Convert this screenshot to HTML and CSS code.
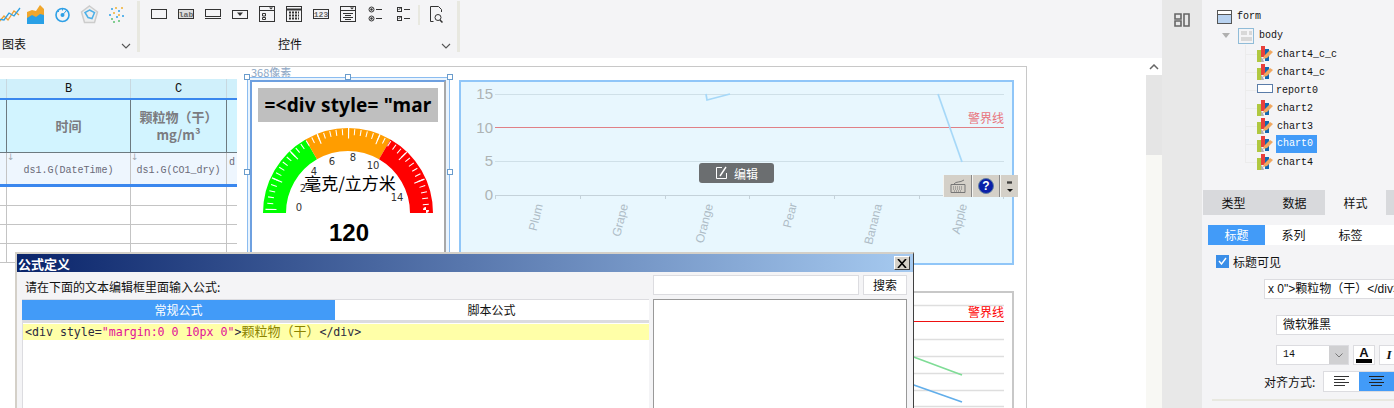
FILE: index.html
```html
<!DOCTYPE html>
<html lang="zh">
<head>
<meta charset="utf-8">
<title>表单设计</title>
<link rel="stylesheet" href="styles.css">
</head>
<body>
<div class="app">
  <div class="work">
    <header class="toolbar">
      <section class="tb-group tb-charts">
        <div class="tb-icons">
          <svg class="ico-first" viewBox="5 0 22 20"><polyline points="3,18 9,11 13,15 19,6 24,10" fill="none" stroke="#f0a030" stroke-width="1.3"/><polyline points="3,14 9,15 14,8 19,11 25,3" fill="none" stroke="#2ea0e0" stroke-width="1.3"/></svg>
          <svg class="ico" viewBox="0 0 27 20"><path d="M5 19V9l5-2 4 2 4-5 4 1 0 14z" fill="#29a0e6"/><path d="M5 13V7l5-2 4 1 4-6 4 4v6l-4-1-4 3-4-2z" fill="#f0a62c"/></svg>
          <svg class="ico" viewBox="0 0 27 20"><circle cx="13.500" cy="10" r="6.500" fill="none" stroke="#2ea0e6" stroke-width="1.600"/><circle cx="13.500" cy="10" r="2" fill="#2ea0e6"/><path d="M13.500 10l4-4.500" stroke="#2ea0e6"/><path d="M9 6l1 1M13.500 4v1.500" stroke="#2ea0e6"/></svg>
          <svg class="ico" viewBox="0 0 27 20"><path d="M13.500 1l8 6-3 10.500h-10l-3-10.500z" fill="#eee" stroke="#cccccc" stroke-width="1.500"/><path d="M13.500 5l5 2.500-2.500 6-4-1-3-5z" fill="none" stroke="#4db0e8" stroke-width="1.500"/></svg>
          <svg class="ico" viewBox="0 0 27 20"><g fill="#2ea0e6"><circle cx="9" cy="4" r="1"/><circle cx="16" cy="6" r="1"/><circle cx="7" cy="10" r="1"/><circle cx="20" cy="11" r="1"/><circle cx="14" cy="12" r="1"/></g><g fill="#f0b030"><circle cx="13" cy="3" r="1"/><circle cx="19" cy="3" r="1"/><circle cx="11" cy="8" r="1"/><circle cx="16" cy="10" r="1"/></g><g fill="#5cc070"><circle cx="11" cy="17" r="1"/><circle cx="16" cy="16" r="1"/><circle cx="9" cy="14" r="1"/></g></svg>
        </div>
        <div class="tb-foot tb-foot-charts">
          <span class="tb-label">图表</span>
          <svg class="chev" viewBox="0 0 10 6"><path d="M1 1l4 4 4-4" fill="none" stroke="#555" stroke-width="1.100"/></svg>
        </div>
      </section>
      <section class="tb-group tb-controls">
        <div class="tb-icons">
          <svg class="ico" viewBox="0 0 27 20"><rect x="5.500" y="4.500" width="15" height="9" fill="none" stroke="#333"/></svg>
          <svg class="ico" viewBox="0 0 27 20"><rect x="5.500" y="4.500" width="15" height="9" fill="#ddd" stroke="#333"/><text x="13" y="12" class="ico-t">lab</text></svg>
          <svg class="ico" viewBox="0 0 27 20"><rect x="5.500" y="4.500" width="15" height="7" fill="none" stroke="#333"/><path d="M5 13.500h16" stroke="#333"/></svg>
          <svg class="ico" viewBox="0 0 27 20"><rect x="5.500" y="5.500" width="15" height="8" fill="none" stroke="#333"/><path d="M10 7.500h6l-3 3.500z" fill="#333"/></svg>
          <svg class="ico" viewBox="0 0 27 20"><rect x="5.500" y="1.500" width="15" height="15" fill="none" stroke="#333"/><path d="M5 5.500h16" stroke="#333"/><path d="M15 2.500h4l-2 2z" fill="#333"/><path d="M8.500 8.500h3v2.500h-3zM8.500 12.500h3v2h-3z" fill="none" stroke="#333"/></svg>
          <svg class="ico" viewBox="0 0 27 20"><rect x="5.500" y="1.500" width="15" height="15" fill="none" stroke="#333"/><path d="M5 4.500h16" stroke="#333" stroke-width="2"/><path d="M8 7.500h10M8 10.500h10M8 13.500h10" stroke="#333" stroke-width="2" stroke-dasharray="2 1"/></svg>
          <svg class="ico" viewBox="0 0 27 20"><rect x="5.500" y="4.500" width="15" height="9" fill="none" stroke="#333"/><text x="13" y="12" class="ico-t">123</text></svg>
          <svg class="ico" viewBox="0 0 27 20"><rect x="5.500" y="1.500" width="15" height="15" fill="none" stroke="#333"/><path d="M5 5.500h16" stroke="#333"/><path d="M15 2.500h4l-2 2z" fill="#333"/><path d="M8 8.500h10M10 10.500h6M8 12.500h10M10 14.500h6" stroke="#333"/></svg>
          <svg class="ico" viewBox="0 0 27 20"><circle cx="9.500" cy="4.500" r="2.500" fill="none" stroke="#333"/><circle cx="9.500" cy="4.500" r="1.200" fill="#333"/><circle cx="9.500" cy="13.500" r="2.500" fill="none" stroke="#333"/><circle cx="9.500" cy="13.500" r="1.200" fill="#333"/><path d="M14 4.500h6M14 13.500h6" stroke="#333"/></svg>
          <svg class="ico" viewBox="0 0 27 20"><rect x="8.500" y="2.500" width="4" height="4" fill="none" stroke="#333"/><rect x="8.500" y="11.500" width="4" height="4" fill="none" stroke="#333"/><path d="M9.500 5l2-2M9.500 14l2-2" stroke="#333"/><path d="M15 4.500h6M15 13.500h6" stroke="#333"/></svg>
          <span class="tb-sep"></span>
          <svg class="ico" viewBox="0 0 27 20"><path d="M19.500 7V4.500l-3-3h-8v15h3" fill="none" stroke="#333"/><circle cx="16" cy="12.500" r="3" fill="none" stroke="#333"/><path d="M18 15l2.500 2.500" stroke="#333" stroke-width="1.500"/></svg>
        </div>
        <div class="tb-foot tb-foot-controls">
          <span class="tb-label">控件</span>
          <svg class="chev" viewBox="0 0 10 6"><path d="M1 1l4 4 4-4" fill="none" stroke="#555" stroke-width="1.100"/></svg>
        </div>
      </section>
    </header>

    <div class="lower">
      <main class="stage">
        <div class="frame"></div>

        <div class="sheet">
          <div class="row row-letters"><span class="c c0"></span><span class="c c1">B</span><span class="c c2">C</span><span class="c c3"></span></div>
          <div class="row row-title"><span class="c c0"></span><span class="c c1">时间</span><span class="c c2">颗粒物（干）<br>mg/m³</span><span class="c c3"></span></div>
          <div class="row row-formula">
            <span class="c c0"></span>
            <span class="c c1"><i class="mark">↓</i>ds1.G(DateTime)</span>
            <span class="c c2"><i class="mark">↓</i>ds1.G(CO1_dry)</span>
            <span class="c c3"><b class="clip">d</b></span>
          </div>
          <div class="row row-empty"><span class="c c0"></span><span class="c c1"></span><span class="c c2"></span><span class="c c3"></span></div>
          <div class="row row-empty"><span class="c c0"></span><span class="c c1"></span><span class="c c2"></span><span class="c c3"></span></div>
          <div class="row row-empty"><span class="c c0"></span><span class="c c1"></span><span class="c c2"></span><span class="c c3"></span></div>
          <div class="row row-empty"><span class="c c0"></span><span class="c c1"></span><span class="c c2"></span><span class="c c3"></span></div>
        </div>

        <span class="ruler">368像素</span>
        <div class="selection"></div>
        <span class="handle h1"></span><span class="handle h2"></span><span class="handle h3"></span><span class="handle h4"></span><span class="handle h5"></span>

        <section class="gauge-card">
          <div class="gauge-title">=&lt;div style= "mar</div>
          <svg class="gauge" width="192" height="128" viewBox="0 0 192 128">
            <path d="M22.500 91A73.500 73.500 0 0 1 59.250 27.350" fill="none" stroke="#00ff00" stroke-width="23"/>
            <path d="M59.250 27.350A73.500 73.500 0 0 1 132.750 27.350" fill="none" stroke="#ff9d00" stroke-width="23"/>
            <path d="M132.750 27.350A73.500 73.500 0 0 1 169.500 91" fill="none" stroke="#ff0000" stroke-width="23"/>
            <path d="M18 88A78 78 0 0 1 174 88" fill="none" stroke="#fff" stroke-width="6" pathLength="40" stroke-dasharray="0.170 0.830"/>
            <path d="M19 88A77 77 0 0 1 173 88" fill="none" stroke="#fff" stroke-width="11" pathLength="8" stroke-dasharray="0.040 0.960"/>
            <g class="gauge-num">
              <text x="47" y="89">0</text><text x="51" y="70">2</text><text x="62" y="53">4</text><text x="80" y="43">6</text><text x="101" y="39">8</text><text x="121" y="47">10</text><text x="145" y="79">14</text>
            </g>
            <text class="gauge-unit" x="98" y="68">毫克/立方米</text>
            <text class="gauge-value" x="97" y="119">120</text>
          </svg>
        </section>

        <section class="chart-card">
          <svg class="line-chart" width="551" height="181" viewBox="0 0 551 181">
            <g stroke="#cfe0e8" stroke-width="1">
              <path d="M34 12.500H543M34 79.500H543"/>
            </g>
            <path d="M34 113.500H543" stroke="#c4d2da"/>
            <path d="M34.500 113v4M119.500 113v4M204.500 113v4M288.500 113v4M373.500 113v4M458.500 113v4M542.500 113v4" stroke="#c4d2da"/>
            <path d="M34 45.500H543" stroke="#e08086"/>
            <polyline points="245,12 246,18 269,12" fill="none" stroke="#a6d8f8" stroke-width="1.700"/>
            <line x1="477" y1="12" x2="501" y2="80" stroke="#a6d8f8" stroke-width="1.700"/>
            <g class="y-axis"><text x="32" y="17">15</text><text x="32" y="51">10</text><text x="32" y="84">5</text><text x="32" y="118">0</text></g>
            <text class="limit" x="543" y="41">警界线</text>
            <g class="x-axis">
              <text transform="translate(82 123) rotate(-76)">Plum</text>
              <text transform="translate(167 123) rotate(-76)">Grape</text>
              <text transform="translate(252 123) rotate(-76)">Orange</text>
              <text transform="translate(336 122) rotate(-76)">Pear</text>
              <text transform="translate(421 123) rotate(-76)">Banana</text>
              <text transform="translate(506 123) rotate(-76)">Apple</text>
            </g>
          </svg>
        </section>

        <button class="edit-btn" type="button">
          <svg width="13" height="14" viewBox="0 0 13 14"><path d="M7 1.500H1.500v11h10V7" fill="none" stroke="#fff"/><path d="M5 10l6-9" stroke="#fff" stroke-width="1.400"/></svg>
          <span>编辑</span>
        </button>

        <div class="float-tools">
          <span class="ft ft-kb"><svg width="20" height="17" viewBox="0 0 20 17"><path d="M3 6.500h14v8H3z" fill="#d4d0c8" stroke="#777"/><path d="M5 9h10M5 11h10M6 13h8" stroke="#777" stroke-dasharray="1 1"/><path d="M6 6c2-3 6-1 10-4" fill="none" stroke="#777"/></svg></span>
          <span class="ft ft-help"><i>?</i></span>
          <span class="ft ft-more"><svg width="8" height="16" viewBox="0 0 8 16"><path d="M1 4h5M1 5h5" stroke="#111"/><path d="M1 11h6l-3 3z" fill="#111"/></svg></span>
        </div>

        <section class="chart-card2">
          <svg class="line-chart2" width="551" height="120" viewBox="0 0 551 120">
            <path d="M450 12.500H543M450 46.500H543M450 63.500H543M450 80.500H543M450 97.500H543M450 113.500H543" stroke="#dedede" stroke-width="1.400"/>
            <path d="M450 28.500H543" stroke="#ee1111" stroke-width="1.200"/>
            <polyline points="450,63 501,82" fill="none" stroke="#7fdc96" stroke-width="1.700"/>
            <polyline points="450,91 501,109" fill="none" stroke="#62aeea" stroke-width="1.700"/>
            <text class="limit2" x="543" y="24">警界线</text>
          </svg>
        </section>

        <section class="dialog">
          <div class="dlg-title">
            <span>公式定义</span>
            <button class="dlg-close" type="button"><svg width="10" height="9" viewBox="0 0 10 9"><path d="M1 0l8 9M9 0L1 9" stroke="#000" stroke-width="1.600"/></svg></button>
          </div>
          <div class="dlg-body">
            <div class="dlg-left">
              <p class="dlg-hint">请在下面的文本编辑框里面输入公式:</p>
              <div class="dlg-tabs"><span class="dlg-tab on">常规公式</span><span class="dlg-tab">脚本公式</span></div>
              <div class="editor">
                <div class="code-line"><span class="k">&lt;div style=</span><span class="s">"margin:0 0 10px 0"</span><span class="k">&gt;</span><span class="t">颗粒物（干）</span><span class="k">&lt;/div&gt;</span></div>
              </div>
            </div>
            <div class="dlg-right">
              <div class="search"><span class="search-in"></span><span class="search-btn">搜索</span></div>
              <div class="results"></div>
            </div>
          </div>
        </section>
      </main>
      <div class="vscroll">
        <span class="vs-up"><svg width="10" height="6" viewBox="0 0 10 6"><path d="M1 5l4-4 4 4" fill="none" stroke="#666" stroke-width="1.500"/></svg></span>
        <span class="vs-thumb"></span>
      </div>
    </div>
  </div>

  <div class="rail">
    <svg width="16" height="14" viewBox="0 0 16 14"><path d="M1 1h6v5H1zM1 8h6v5H1zM10 1h5v12h-5z" fill="#e8e8e8" stroke="#666" stroke-width="1.600"/></svg>
  </div>

  <aside class="side">
    <nav class="tree">
      <div class="node n-form">
        <svg width="15" height="14" viewBox="0 0 15 14"><rect x=".5" y=".5" width="14" height="13" fill="#b8d2f0" stroke="#555"/><path d="M.5 4.500h14" stroke="#555"/><rect x="1" y="1" width="13" height="3" fill="#fff"/></svg>
        <span>form</span>
      </div>
      <div class="node n-body">
        <i class="tri"></i>
        <svg width="16" height="16" viewBox="0 0 16 16"><rect x=".5" y=".5" width="15" height="15" fill="#f4f4f6" stroke="#90bcd8"/><rect x="3" y="3" width="6" height="4" fill="#d8d8d8"/><rect x="11" y="3" width="3" height="4" fill="#d8d8d8"/><rect x="3" y="9" width="11" height="4" fill="#d8d8d8"/></svg>
        <span>body</span>
      </div>
      <div class="children">
        <div class="node"><svg class="ci" viewBox="0 0 16 16"><use href="#chart-ico"/></svg><span>chart4_c_c</span></div>
        <div class="node"><svg class="ci" viewBox="0 0 16 16"><use href="#chart-ico"/></svg><span>chart4_c</span></div>
        <div class="node"><svg class="ci" viewBox="0 0 16 16"><rect x=".5" y="2.500" width="15" height="8" fill="#fff" stroke="#5a7ca8"/></svg><span class="tight">report0</span></div>
        <div class="node"><svg class="ci" viewBox="0 0 16 16"><use href="#chart-ico"/></svg><span>chart2</span></div>
        <div class="node"><svg class="ci" viewBox="0 0 16 16"><use href="#chart-ico"/></svg><span>chart3</span></div>
        <div class="node"><svg class="ci" viewBox="0 0 16 16"><use href="#chart-ico"/></svg><span class="sel">chart0</span></div>
        <div class="node"><svg class="ci" viewBox="0 0 16 16"><use href="#chart-ico"/></svg><span>chart4</span></div>
      </div>
      <svg class="defs" width="0" height="0"><defs><g id="chart-ico"><rect x="0" y="4" width="4" height="12" fill="#b0c840"/><rect x="4" y="0" width="4" height="11" fill="#e8403c"/><rect x="8" y="3" width="4" height="12" fill="#1068b0"/><path d="M6 13l1-3 6-6 3 2-6 6z" fill="#f0a860"/><path d="M4 16v-5l2 2 1 3z" fill="#b0b0b0"/></g></defs></svg>
    </nav>

    <div class="tabs"><span class="tab">类型</span><span class="tab">数据</span><span class="tab on">样式</span><span class="tab tab-rest"></span></div>
    <div class="subtabs"><span class="sub on">标题</span><span class="sub">系列</span><span class="sub">标签</span></div>

    <label class="check"><i class="box"><svg width="9" height="8" viewBox="0 0 9 8"><path d="M1 4l2.500 3L8 1" fill="none" stroke="#fff" stroke-width="1.400"/></svg></i>标题可见</label>

    <div class="field f-title"><span>x 0"&gt;颗粒物（干）&lt;/div&gt;</span></div>
    <div class="field f-font">微软雅黑</div>
    <div class="font-row">
      <span class="select"><b>14</b><i class="sel-arrow"><svg width="8" height="5" viewBox="0 0 8 5"><path d="M.5.500L4 4 7.500.500" fill="none" stroke="#777"/></svg></i></span>
      <span class="color-btn"><b>A</b><i></i></span>
      <span class="italic-btn">I</span>
    </div>
    <div class="align-row">
      <span class="align-label">对齐方式:</span>
      <div class="align-group">
        <span class="al"><svg width="15" height="11" viewBox="0 0 15 11"><path d="M0 .500h15M0 3.500h11M0 6.500h15M0 9.500h11" stroke="#333"/></svg></span>
        <span class="al on"><svg width="15" height="11" viewBox="0 0 15 11"><path d="M0 .500h15M2 3.500h11M0 6.500h15M2 9.500h11" stroke="#222"/></svg></span>
      </div>
    </div>
    <div class="rule"></div>
  </aside>
</div>
</body>
</html>
```

FILE: styles.css
```css
* { box-sizing: border-box; }
html, body { margin: 0; padding: 0; background: #fff; }
body { font-family: "Liberation Sans", "Noto Sans CJK SC", sans-serif; font-size: 12px; color: #111; overflow: hidden; }
p { margin: 0; }
i { font-style: normal; }
button { padding: 0; margin: 0; font: inherit; }

.app { display: flex; width: 1394px; height: 408px; overflow: hidden; }
.work { width: 1162px; display: flex; flex-direction: column; }
.rail { width: 40px; background: #e8e8e8; display: flex; justify-content: center; align-items: flex-start; padding-top: 13px; }
.side { width: 192px; background: #f4f4f6; overflow: hidden; }

/* toolbar */
.toolbar { height: 58px; background: #f4f4f6; display: flex; flex: none; }
.tb-group { height: 51px; margin-top: 1px; display: flex; flex-direction: column; border-right: 3px solid #e8e8e0; }
.tb-charts { width: 140px; }
.tb-controls { width: 320px; padding-left: 6px; }
.tb-icons { display: flex; align-items: flex-start; height: 38px; padding-top: 4px; flex: none; }
.ico { width: 27px; height: 20px; flex: none; }
.ico-first { width: 22px; height: 20px; flex: none; }
.ico-t { font-family: "Liberation Mono", monospace; font-size: 8px; font-weight: 700; text-anchor: middle; fill: #666; }
.tb-sep { width: 2px; height: 20px; margin: 0 2px; background: #e8e8e0; flex: none; }
.tb-foot { display: flex; align-items: center; height: 13px; flex: none; }
.tb-foot-charts { padding-left: 2px; }
.tb-foot-controls { padding-left: 132px; }
.tb-label { font-size: 12px; line-height: 13px; }
.tb-foot-charts .chev { margin-left: 95px; }
.tb-foot-controls .chev { margin-left: 139px; }
.chev { width: 10px; height: 6px; flex: none; }

/* stage */
.lower { flex: 1; display: flex; min-height: 0; }
.stage { position: relative; width: 1146px; background: #fff; overflow: hidden; }
.frame { position: absolute; left: -2px; top: 8px; width: 1029px; height: 400px; border: 1px solid #c8c8c8; }

.vscroll { width: 16px; background: #f8f8f4; display: flex; flex-direction: column; }
.vs-up { height: 17px; background: #fff; display: flex; align-items: center; justify-content: center; }
.vs-thumb { height: 80px; background: #e5e5e5; }

/* sheet */
.sheet { position: absolute; left: 0; top: 21px; width: 237px; font-family: "Liberation Mono", "Noto Sans CJK SC", monospace; }
.row { display: grid; grid-template-columns: 7px 124px 96px 10px; }
.c { display: flex; align-items: center; justify-content: center; text-align: center; border-right: 1px solid #c4c4c4; position: relative; }
.c3 { border-right: 0; overflow: hidden; }
.row-letters { height: 19px; background: #d0f0fb; }
.row-letters .c { border-right-color: #c8d8e0; font-size: 12px; color: #111; }
.row-title { height: 55px; background: #d2f4ff; border-top: 2px solid #3a87ee; border-bottom: 1px solid #6d7a80; }
.row-title .c { border-right-color: #6d7a80; font-family: "Noto Sans CJK SC", "Liberation Sans", sans-serif; font-size: 13px; line-height: 18px; font-weight: 700; color: #7b7b80; }
.row-formula { height: 34px; background: #eef6fe; border-bottom: 3px solid #3a87ee; }
.row-formula .c { font-size: 10px; color: #6a6a78; padding-top: 4px; }
.row-empty { height: 19px; border-bottom: 1px solid #c4c4c4; }
.mark { position: absolute; left: 0; top: -2px; font-size: 9px; line-height: 12px; color: #a0a8b0; font-family: "DejaVu Sans", sans-serif; }
.clip { font-weight: 400; position: absolute; left: 2px; top: 4px; }

/* gauge card */
.ruler { position: absolute; left: 251px; top: 8px; font-size: 11px; line-height: 13px; color: #8ca6c4; font-family: "Noto Sans CJK SC", sans-serif; }
.selection { position: absolute; left: 247px; top: 19px; width: 203px; height: 190px; background: #eaf4fd; border: 1px solid #8bbcf0; }
.handle { position: absolute; width: 6px; height: 6px; background: #fff; border: 1px solid #6a9ccc; }
.h1 { left: 244px; top: 16px; }
.h2 { left: 345px; top: 16px; }
.h3 { left: 447px; top: 16px; }
.h4 { left: 244px; top: 111px; }
.h5 { left: 447px; top: 111px; }
.gauge-card { position: absolute; left: 250px; top: 22px; width: 196px; height: 180px; background: #fff; border: 2px solid #a8a8a8; border-top-color: #6ea0e0; border-left-color: #6ea0e0; padding: 6px; }
.gauge-title { height: 34px; background: #bfbfbf; font-family: "Noto Sans", sans-serif; font-size: 19px; font-weight: 700; letter-spacing: .2px; line-height: 34px; color: #000; text-align: center; white-space: nowrap; overflow: hidden; }
.gauge { display: block; margin: 0 -6px; }
.gauge-num text { font-family: "DejaVu Sans", sans-serif; font-size: 10px; fill: #333; text-anchor: middle; }
.gauge-unit { font-family: "Noto Sans CJK SC", sans-serif; font-size: 17px; text-anchor: middle; fill: #000; }
.gauge-value { font-family: "Liberation Sans", sans-serif; font-size: 24px; font-weight: 700; text-anchor: middle; fill: #000; }

/* line chart */
.chart-card { position: absolute; left: 459px; top: 22px; width: 555px; height: 185px; background: #e8f7fe; border: 2px solid #90c6f8; }
.line-chart { display: block; }
.y-axis text { font-size: 15px; fill: #aeb4b4; text-anchor: end; }
.limit { font-family: "Noto Sans CJK SC", sans-serif; font-size: 12px; fill: #e8747c; text-anchor: end; }
.x-axis text { font-size: 12px; fill: #aebcc6; text-anchor: end; }
.edit-btn { position: absolute; left: 699px; top: 105px; width: 75px; height: 20px; background: #6b6e70; border: 0; border-radius: 3px; color: #fff; font-family: "Noto Sans CJK SC", sans-serif; font-size: 12px; display: flex; align-items: center; justify-content: center; gap: 6px; }
.float-tools { position: absolute; left: 943px; top: 117px; height: 22px; display: flex; background: #d4d0c8; }
.ft { display: flex; align-items: center; justify-content: center; height: 22px; border-left: 1px solid #f4f4f0; border-right: 1px solid #888; }
.ft-kb { width: 29px; }
.ft-help { width: 28px; }
.ft-help i { width: 16px; height: 16px; border-radius: 50%; background: #0a1fa8; border: 1px solid #6080a0; color: #fff; font-size: 12px; font-weight: 700; line-height: 14px; text-align: center; }
.ft-more { width: 18px; border-right: 0; }

.chart-card2 { position: absolute; left: 459px; top: 233px; width: 555px; height: 130px; background: #fff; border: 2px solid #c8c8c8; }
.line-chart2 { display: block; }
.limit2 { font-family: "Noto Sans CJK SC", sans-serif; font-size: 12px; fill: #f00; text-anchor: end; }

/* dialog */
.dialog { position: absolute; left: 15px; top: 194px; width: 899px; height: 170px; background: #f4f4f6; border: 2px solid #d4d0c8; border-right: 1px solid #404040; border-bottom: 0; }
.dlg-title { height: 18px; background: linear-gradient(90deg, #0a246a, #a6caf0); display: flex; align-items: center; justify-content: space-between; padding: 0 3px 0 1px; color: #fff; font-family: "Noto Sans CJK SC", sans-serif; font-size: 13px; font-weight: 700; }
.dlg-close { width: 16px; height: 14px; background: #d4d0c8; border: 1px solid; border-color: #fff #404040 #404040 #fff; display: flex; align-items: center; justify-content: center; }
.dlg-body { display: flex; gap: 4px; padding-left: 5px; }
.dlg-left { width: 627px; }
.dlg-hint { height: 27px; padding: 7px 0 0 3px; line-height: 16px; font-family: "Noto Sans CJK SC", sans-serif; font-size: 12px; }
.dlg-tabs { display: flex; height: 21px; background: #fff; border-top: 1px solid #dcdce0; font-family: "Noto Sans CJK SC", sans-serif; font-size: 12px; line-height: 20px; text-align: center; }
.dlg-tab { width: 313px; }
.dlg-tab.on { background: #429bf8; color: #fff; }
.editor { height: 90px; background: #fff; border-top: 3px solid #dcdce0; border-left: 1px solid #dcdce0; padding-top: 1px; }
.code-line { height: 16px; background: #ffffa8; padding-left: 2px; font-family: "DejaVu Sans Mono", "Noto Sans CJK SC", monospace; font-size: 11.600px; line-height: 16px; white-space: nowrap; }
.k { color: #2a2a40; }
.s { color: #e0109a; }
.t { color: #8c8400; font-size: 13px; }
.dlg-right { width: 254px; padding-top: 3px; }
.search { display: flex; gap: 4px; height: 20px; }
.search-in { width: 206px; background: #fff; border: 1px solid #dcdce0; }
.search-btn { width: 44px; background: #fff; border: 1px solid #dcdce0; text-align: center; font-family: "Noto Sans CJK SC", sans-serif; font-size: 12px; line-height: 18px; }
.results { height: 120px; margin-top: 4px; background: #fff; border: 1px solid #999; }

/* tree */
.tree { height: 190px; padding-top: 7px; font-family: "Liberation Mono", monospace; font-size: 10px; color: #111; }
.node { display: flex; align-items: center; }
.n-form { height: 19px; padding-left: 15px; gap: 5px; }
.n-body { height: 19px; padding-left: 20px; }
.n-body span { margin-left: 5px; }
.tri { width: 0; height: 0; border: 4px solid transparent; border-top: 5px solid #b0b0b0; border-bottom: 0; margin-right: 8px; }
.children { margin-left: 43px; width: 140px; height: 118px; border-left: 1px solid #ececec; }
.children .node { height: 18px; padding-left: 11px; position: relative; }
.children .node::before { content: ""; position: absolute; left: 0; top: 9px; width: 11px; height: 1px; background: #ececec; }
.ci { width: 16px; height: 16px; flex: none; margin-right: 4px; }
.tight { margin-left: -1px; }
.sel { background: #429bf8; color: #fff; padding: 0 4px 0 1px; margin-left: -1px; line-height: 18px; }
.defs { position: absolute; }

/* side tabs */
.tabs { display: flex; height: 25px; padding-left: 1px; font-family: "Noto Sans CJK SC", sans-serif; font-size: 12px; line-height: 25px; text-align: center; }
.tab { width: 61px; background: #d8d9dc; }
.tab.on { background: #f4f4f6; }
.tab-rest { width: 8px; }
.subtabs { display: flex; height: 20px; margin: 10px 0 0 6px; background: #fff; font-family: "Noto Sans CJK SC", sans-serif; font-size: 12px; line-height: 20px; text-align: center; }
.sub { width: 57px; }
.sub.on { background: #429bf8; color: #fff; }
.check { display: flex; align-items: center; gap: 4px; height: 14px; margin: 9px 0 0 14px; font-family: "Noto Sans CJK SC", sans-serif; font-size: 12px; }
.box { width: 13px; height: 13px; background: #3a8ee8; display: flex; align-items: center; justify-content: center; }
.field { background: #fff; border: 1px solid #dcdce0; border-right: 0; height: 20px; overflow: hidden; white-space: nowrap; font-family: "Liberation Sans", "Noto Sans CJK SC", sans-serif; font-size: 12px; line-height: 18px; }
.f-title { margin: 11px 0 0 62px; padding-left: 3px; }
.f-font { margin: 16px 0 0 74px; padding-left: 6px; font-size: 12px; }
.font-row { display: flex; gap: 4px; height: 20px; margin: 10px 0 0 74px; }
.select { width: 73px; flex: none; display: flex; background: #fff; border: 1px solid #dcdce0; }
.select b { flex: 1; padding-left: 6px; font-family: "Liberation Mono", monospace; font-size: 10px; font-weight: 400; line-height: 18px; }
.sel-arrow { width: 19px; background: #d0d0d2; display: flex; align-items: center; justify-content: center; }
.color-btn { width: 22px; flex: none; background: #fff; border: 1px solid #dcdce0; display: flex; flex-direction: column; align-items: center; }
.color-btn b { font-size: 13px; line-height: 13px; }
.color-btn i { width: 16px; height: 4px; background: #000; }
.italic-btn { width: 20px; flex: none; background: #fff; border: 1px solid #dcdce0; font-family: "Liberation Serif", serif; font-style: italic; font-weight: 700; font-size: 13px; line-height: 18px; text-align: center; }
.align-row { display: flex; align-items: center; height: 21px; margin: 6px 0 0 62px; }
.align-label { width: 60px; font-family: "Noto Sans CJK SC", sans-serif; font-size: 12px; }
.align-group { flex: 1; height: 21px; display: flex; background: #fff; border: 1px solid #dcdce0; border-right: 0; }
.al { width: 35px; display: flex; align-items: center; justify-content: center; }
.al.on { flex: 1; background: #429bf8; }
.rule { height: 2px; margin: 7px 0 0 10px; background: #e8e8e0; }
```
